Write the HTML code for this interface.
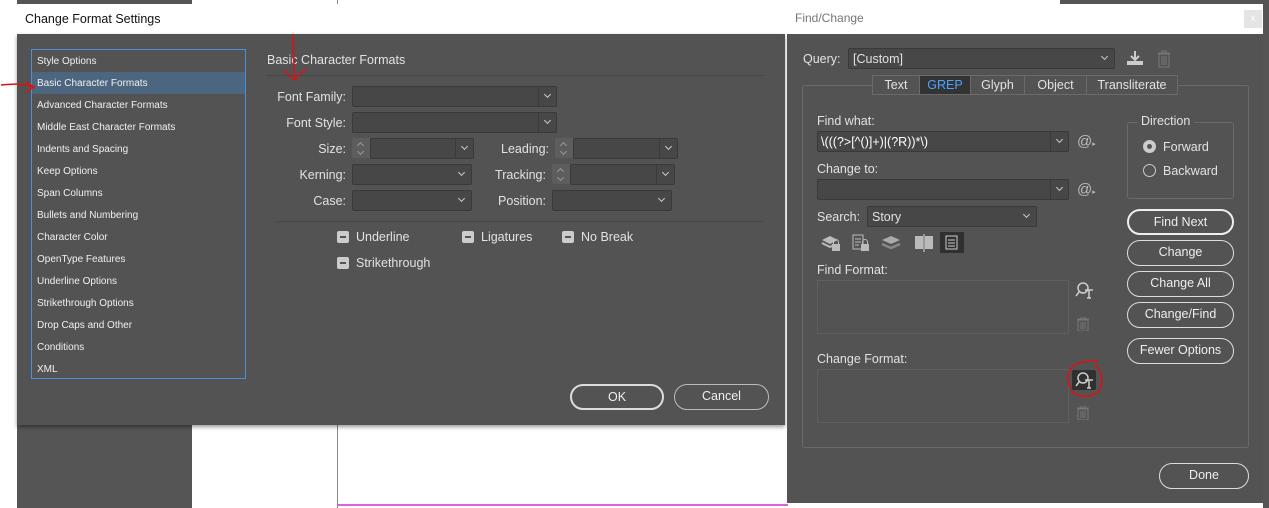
<!DOCTYPE html>
<html><head><meta charset="utf-8"><style>
*{box-sizing:border-box;margin:0;padding:0}
body{width:1269px;height:508px;position:relative;overflow:hidden;background:#fff;font-family:"Liberation Sans",sans-serif;font-size:12px;color:#e2e2e2}
.a{position:absolute}
.dark{background:#535353}
.fld{position:absolute;background:#474747;border:1px solid #3a3a3a;border-radius:2px}
.fld .dd{position:absolute;right:0;top:0;bottom:0;width:18px;border-left:1px solid #3a3a3a}
.dd:after{content:"";position:absolute;left:6px;top:5px;width:4px;height:4px;border-right:1px solid #ccc;border-bottom:1px solid #ccc;transform:rotate(45deg)}
.stp{position:absolute;background:#5d5d5d;width:18px;height:20px;border-radius:2px 0 0 2px}
.stp:before,.stp:after{content:"";position:absolute;left:6px;width:4px;height:4px;border-left:1px solid #999;border-top:1px solid #999;transform:rotate(45deg)}
.stp:before{top:5px}
.stp:after{top:11px;transform:rotate(225deg)}
.lbl{position:absolute;text-align:right;font-size:12.5px}
.list div{height:22px;line-height:23px;padding-left:5px;font-size:10px;color:#f0f0f0}
.btn{position:absolute;border:1.5px solid #ddd;border-radius:13px;text-align:center;line-height:23px;font-size:12.5px;color:#eee}
.cb{position:absolute;width:12px;height:12px;background:#ccc;border-radius:2px}
.cb:after{content:"";position:absolute;left:3px;top:5px;width:6px;height:2px;background:#555}
.tab{position:absolute;top:75px;height:20px;border:1px solid #6a6a6a;text-align:center;line-height:19px;font-size:12.5px;background:#535353}
.t{position:absolute;font-size:12.5px}
</style></head><body>
<div class="a dark" style="left:17px;top:0;width:175px;height:508px;background:#555"></div>
<div class="a" style="left:337px;top:0;width:1px;height:508px;background:#888"></div>
<div class="a" style="left:338px;top:504px;width:450px;height:2px;background:#e060e0"></div>
<div class="a" style="left:1263px;top:0;width:6px;height:508px;background:#555"></div>
<div class="a" style="left:1060px;top:0;width:209px;height:4px;background:#555"></div>
<div class="a" style="left:0;top:0;width:17px;height:508px;background:#fff"></div>

<div class="a" style="left:17px;top:4px;width:768px;height:30px;background:#fff;color:#111;font-size:12.5px;line-height:30px;padding-left:8px">Change Format Settings</div>
<div class="a dark" style="left:17px;top:34px;width:768px;height:391px;box-shadow:0 2px 4px rgba(0,0,0,.4)"></div>
<div class="a list" style="left:31px;top:49px;width:215px;height:330px;border:1px solid #4a90d9">
<div>Style Options</div><div style="background:#4c6680">Basic Character Formats</div><div>Advanced Character Formats</div><div>Middle East Character Formats</div><div>Indents and Spacing</div><div>Keep Options</div><div>Span Columns</div><div>Bullets and Numbering</div><div>Character Color</div><div>OpenType Features</div><div>Underline Options</div><div>Strikethrough Options</div><div>Drop Caps and Other</div><div>Conditions</div><div>XML</div>
</div>
<div class="t" style="left:267px;top:53px">Basic Character Formats</div>
<div class="a" style="left:266px;top:75px;width:499px;height:1px;background:#474747"></div>

<div class="lbl" style="left:260px;top:90px;width:86px">Font Family:</div>
<div class="fld" style="left:352px;top:86px;width:205px;height:21px"><div class="dd"></div></div>
<div class="lbl" style="left:260px;top:116px;width:86px">Font Style:</div>
<div class="fld" style="left:352px;top:112px;width:205px;height:21px"><div class="dd"></div></div>
<div class="lbl" style="left:260px;top:142px;width:86px">Size:</div>
<div class="stp" style="left:352px;top:138px"></div>
<div class="fld" style="left:370px;top:138px;width:104px;height:21px"><div class="dd"></div></div>
<div class="lbl" style="left:460px;top:142px;width:89px">Leading:</div>
<div class="stp" style="left:555px;top:138px"></div>
<div class="fld" style="left:573px;top:138px;width:105px;height:21px"><div class="dd"></div></div>
<div class="lbl" style="left:260px;top:168px;width:86px">Kerning:</div>
<div class="fld" style="left:352px;top:164px;width:120px;height:21px"><div class="dd" style="border:none"></div></div>
<div class="lbl" style="left:460px;top:168px;width:86px">Tracking:</div>
<div class="stp" style="left:552px;top:164px"></div>
<div class="fld" style="left:570px;top:164px;width:105px;height:21px"><div class="dd"></div></div>
<div class="lbl" style="left:260px;top:194px;width:86px">Case:</div>
<div class="fld" style="left:352px;top:190px;width:120px;height:21px"><div class="dd" style="border:none"></div></div>
<div class="lbl" style="left:460px;top:194px;width:86px">Position:</div>
<div class="fld" style="left:552px;top:190px;width:120px;height:21px"><div class="dd" style="border:none"></div></div>
<div class="a" style="left:276px;top:221px;width:489px;height:1px;background:#474747"></div>
<div class="cb" style="left:337px;top:231px"></div><div class="t" style="left:356px;top:230px">Underline</div>
<div class="cb" style="left:462px;top:231px"></div><div class="t" style="left:481px;top:230px">Ligatures</div>
<div class="cb" style="left:562px;top:231px"></div><div class="t" style="left:581px;top:230px">No Break</div>
<div class="cb" style="left:337px;top:257px"></div><div class="t" style="left:356px;top:256px">Strikethrough</div>
<div class="btn" style="left:570px;top:384px;width:94px;height:26px;border-width:2px">OK</div>
<div class="btn" style="left:674px;top:384px;width:95px;height:26px;border-color:#bbb">Cancel</div>

<div class="a" style="left:787px;top:4px;width:476px;height:30px;background:#fff;color:#777;font-size:12px;line-height:28px;padding-left:8px">Find/Change</div>
<div class="a" style="left:1244px;top:10px;width:18px;height:18px;background:#e4e4e4;color:#fff;font-size:10px;text-align:center;line-height:18px">x</div>
<div class="a dark" style="left:787px;top:34px;width:476px;height:469px"></div>
<div class="t" style="left:803px;top:52px">Query:</div>
<div class="fld" style="left:848px;top:48px;width:267px;height:21px;padding-left:4px;line-height:20px;font-size:12.5px">[Custom]<div class="dd" style="border:none"></div></div>
<svg class="a" style="left:1126px;top:50px" width="18" height="16"><path d="M9 1v8M5 6l4 4 4-4" stroke="#ccc" stroke-width="2" fill="none"/><rect x="1" y="11" width="16" height="4" fill="#ccc"/></svg>
<svg class="a" style="left:1157px;top:50px" width="14" height="18"><path d="M1 3h12M5 3V1h4v2M2 4h10v13H2zM5 6v9M7 6v9M9 6v9" stroke="#777" fill="none"/></svg>
<div class="a" style="left:802px;top:85px;width:447px;height:363px;border:1px solid #6a6a6a;border-radius:3px"></div>
<div class="tab" style="left:872px;width:48px">Text</div>
<div class="tab" style="left:919px;width:52px;background:#333;color:#4da3ff">GREP</div>
<div class="tab" style="left:970px;width:55px">Glyph</div>
<div class="tab" style="left:1024px;width:63px">Object</div>
<div class="tab" style="left:1086px;width:92px">Transliterate</div>

<div class="t" style="left:817px;top:114px">Find what:</div>
<div class="fld" style="left:817px;top:131px;width:252px;height:21px;padding-left:3px;line-height:20px;font-size:12.5px;color:#fff">\(((?&gt;[^()]+)|(?R))*\)<div class="dd"></div></div>
<div class="a" style="left:1077px;top:133px;font-size:15px;color:#bbb">@<span style="font-size:7px">▸</span></div>
<div class="t" style="left:817px;top:162px">Change to:</div>
<div class="fld" style="left:817px;top:179px;width:252px;height:21px"><div class="dd"></div></div>
<div class="a" style="left:1077px;top:181px;font-size:15px;color:#bbb">@<span style="font-size:7px">▸</span></div>
<div class="t" style="left:817px;top:210px">Search:</div>
<div class="fld" style="left:867px;top:206px;width:170px;height:21px;padding-left:4px;line-height:20px;font-size:12.5px">Story<div class="dd" style="border:none"></div></div>
<svg class="a" style="left:820px;top:232px" width="150" height="22" fill="#bbb">
<path d="M2 8l8-4 8 4-8 4z"/><path d="M2 11l8 4 3-1.5" stroke="#bbb" fill="none" stroke-width="2"/><rect x="12" y="12" width="8" height="7"/><path d="M13.5 12v-2a2.5 2.5 0 0 1 5 0v2" stroke="#bbb" fill="none"/>
<rect x="33" y="3" width="10" height="14" fill="none" stroke="#bbb"/><path d="M35 7h6M35 10h6M35 13h4" stroke="#bbb"/><rect x="41" y="12" width="8" height="7"/><path d="M42.5 12v-2a2.5 2.5 0 0 1 5 0v2" stroke="#bbb" fill="none"/>
<path d="M62 8l9-4 9 4-9 4z" fill="#aaa"/><path d="M62 12l9 4 9-4" stroke="#888" fill="none" stroke-width="2.5"/>
<rect x="95" y="4" width="8" height="13"/><rect x="105" y="4" width="8" height="13"/><path d="M104 2v18" stroke="#ddd"/>
<rect x="120" y="0" width="24" height="21" fill="#303030"/><rect x="126" y="4" width="11" height="13" fill="none" stroke="#ccc"/><path d="M128 8h7M128 11h7M128 14h7" stroke="#ccc"/>
</svg>

<div class="a" style="left:1127px;top:122px;width:107px;height:77px;border:1px solid #6a6a6a;border-radius:3px"></div>
<div class="t" style="left:1137px;top:114px;background:#535353;padding:0 4px">Direction</div>
<div class="a" style="left:1143px;top:140px;width:13px;height:13px;border-radius:50%;background:#ccc"><div class="a" style="left:4px;top:4px;width:5px;height:5px;border-radius:50%;background:#555"></div></div>
<div class="t" style="left:1163px;top:140px">Forward</div>
<div class="a" style="left:1143px;top:164px;width:13px;height:13px;border-radius:50%;border:1px solid #ccc"></div>
<div class="t" style="left:1163px;top:164px">Backward</div>
<div class="btn" style="left:1127px;top:209px;width:107px;height:26px;border-width:2px;border-color:#eee">Find Next</div>
<div class="btn" style="left:1127px;top:240px;width:107px;height:26px">Change</div>
<div class="btn" style="left:1127px;top:271px;width:107px;height:26px">Change All</div>
<div class="btn" style="left:1127px;top:302px;width:107px;height:26px">Change/Find</div>
<div class="btn" style="left:1127px;top:338px;width:107px;height:26px">Fewer Options</div>

<div class="t" style="left:817px;top:263px">Find Format:</div>
<div class="a" style="left:817px;top:280px;width:252px;height:54px;border:1px solid #5f5f5f"></div>
<div class="t" style="left:817px;top:352px">Change Format:</div>
<div class="a" style="left:817px;top:369px;width:252px;height:54px;border:1px solid #5f5f5f"></div>
<svg class="a" style="left:1075px;top:281px" width="20" height="18"><circle cx="8" cy="7" r="5" fill="none" stroke="#ccc" stroke-width="1.5"/><path d="M4 11l-3 4M10 9h8M14 9v8M12 17h4" stroke="#ccc" stroke-width="1.5"/></svg>
<svg class="a" style="left:1077px;top:317px" width="12" height="14"><path d="M0 2h12M4 2V0h4v2M1 3h10v11H1zM4 5v7M6 5v7M8 5v7" stroke="#777" fill="none"/></svg>
<div class="a" style="left:1072px;top:370px;width:24px;height:20px;background:#303030;border-radius:2px"></div>
<svg class="a" style="left:1075px;top:371px" width="20" height="18"><circle cx="8" cy="7" r="5" fill="none" stroke="#ccc" stroke-width="1.5"/><path d="M4 11l-3 4M10 9h8M14 9v8M12 17h4" stroke="#ccc" stroke-width="1.5"/></svg>
<svg class="a" style="left:1077px;top:406px" width="12" height="14"><path d="M0 2h12M4 2V0h4v2M1 3h10v11H1zM4 5v7M6 5v7M8 5v7" stroke="#777" fill="none"/></svg>
<div class="btn" style="left:1159px;top:463px;width:90px;height:26px">Done</div>

<svg class="a" style="left:0;top:0" width="1269" height="508" fill="none" stroke="#e01010" stroke-width="1.5">
<path d="M293 34c1 10 0 30 2 45M284 70l10 10 12-11"/>
<path d="M1 85c10-1 20-2 32 2M26 82l8 5-8 5"/>
<path d="M1098 361c-8 0-20 0-26 6-6 7-5 20 2 26 7 5 20 4 25-2 5-7 3-20-4-27"/>
</svg>
</body></html>
